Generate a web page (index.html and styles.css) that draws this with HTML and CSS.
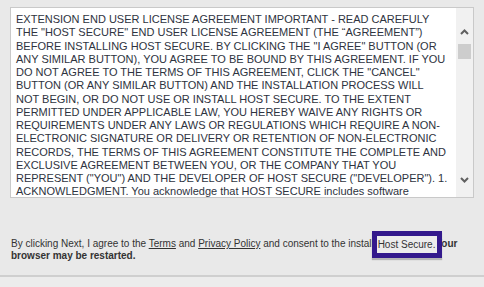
FILE: index.html
```html
<!DOCTYPE html>
<html lang="en">
<head>
    <meta charset="UTF-8">
    <meta name="viewport" content="width=device-width, initial-scale=1.0">
    <title>Host Secure - License</title>
    <link rel="stylesheet" href="styles.css">
</head>
<body>
    <div class="page">
        <div class="license">
            <div class="license-text">
                EXTENSION END USER LICENSE AGREEMENT IMPORTANT - READ CAREFULY<br>
                THE "HOST SECURE" END USER LICENSE AGREEMENT (THE “AGREEMENT”)<br>
                BEFORE INSTALLING HOST SECURE. BY CLICKING THE "I AGREE" BUTTON (OR<br>
                ANY SIMILAR BUTTON), YOU AGREE TO BE BOUND BY THIS AGREEMENT. IF YOU<br>
                DO NOT AGREE TO THE TERMS OF THIS AGREEMENT, CLICK THE "CANCEL"<br>
                BUTTON (OR ANY SIMILAR BUTTON) AND THE INSTALLATION PROCESS WILL<br>
                NOT BEGIN, OR DO NOT USE OR INSTALL HOST SECURE. TO THE EXTENT<br>
                PERMITTED UNDER APPLICABLE LAW, YOU HEREBY WAIVE ANY RIGHTS OR<br>
                REQUIREMENTS UNDER ANY LAWS OR REGULATIONS WHICH REQUIRE A NON-<br>
                ELECTRONIC SIGNATURE OR DELIVERY OR RETENTION OF NON-ELECTRONIC<br>
                RECORDS, THE TERMS OF THIS AGREEMENT CONSTITUTE THE COMPLETE AND<br>
                EXCLUSIVE AGREEMENT BETWEEN YOU, OR THE COMPANY THAT YOU<br>
                REPRESENT ("YOU") AND THE DEVELOPER OF HOST SECURE ("DEVELOPER"). 1.<br>
                ACKNOWLEDGMENT. You acknowledge that HOST SECURE includes software<br>
                components of Developer, including any and all extensions, "plug-ins", updates and upgrades.
            </div>
            <div class="scrollbar">
                <svg class="arrow" width="9" height="6" viewBox="0 0 9 6"><path d="M1 5 L4.5 1.5 L8 5" fill="none" stroke="#606060" stroke-width="2"/></svg>
                <div class="thumb"></div>
                <div class="track"></div>
                <svg class="arrow" width="9" height="6" viewBox="0 0 9 6"><path d="M1 1 L4.5 4.5 L8 1" fill="none" stroke="#606060" stroke-width="2"/></svg>
            </div>
        </div>

        <p class="notice">
            By clicking Next, I agree to the <a href="#">Terms</a> and <a href="#">Privacy Policy</a> and consent to the installation of<span class="highlight">Host Secure.</span> <b>Your browser may be restarted.</b>
        </p>
    </div>
    <div class="footer"></div>
</body>
</html>
```

FILE: styles.css
```css
body {
    margin: 0;
    background: #e9e9e9;
    font-family: "Liberation Sans", Arial, sans-serif;
    color: #333;
}
.page {
    padding: 7px 10px 0 10px;
}
.license {
    display: flex;
    height: 189px;
    border: 1px solid #c9c9c9;
    background: #fff;
}
.license-text {
    flex: 1;
    padding: 5px 2px 0 5px;
    overflow: hidden;
    font-size: 11px;
    line-height: 13.25px;
    color: #2e3340;
}
.scrollbar {
    width: 17px;
    background: #f1f1f1;
    display: flex;
    flex-direction: column;
    align-items: center;
    padding: 21px 0 14px;
}
.arrow { flex: none; }
.thumb {
    width: 13px;
    height: 15px;
    background: #cdcdcd;
    margin-top: 9px;
}
.track { flex: 1; }
.notice {
    margin: 40px 0 0 1px;
    font-size: 10px;
    line-height: 12px;
    color: #333;
}
.notice a {
    color: #333;
}
.notice b {
    font-weight: bold;
}
.highlight {
    position: relative;
    display: inline-block;
    vertical-align: middle;
    width: 59px;
    height: 17px;
    margin: -8px -9px -8px -35px;
    padding-left: 1px;
    line-height: 18px;
    white-space: nowrap;
    background: #ececec;
    border: 5px solid #33198c;
    box-shadow: 0 2px 1px #b5b5b5;
}
.footer {
    margin-top: 13px;
    border-top: 2px solid #cfcfcf;
    height: 14px;
    background: #ececec;
}
```
